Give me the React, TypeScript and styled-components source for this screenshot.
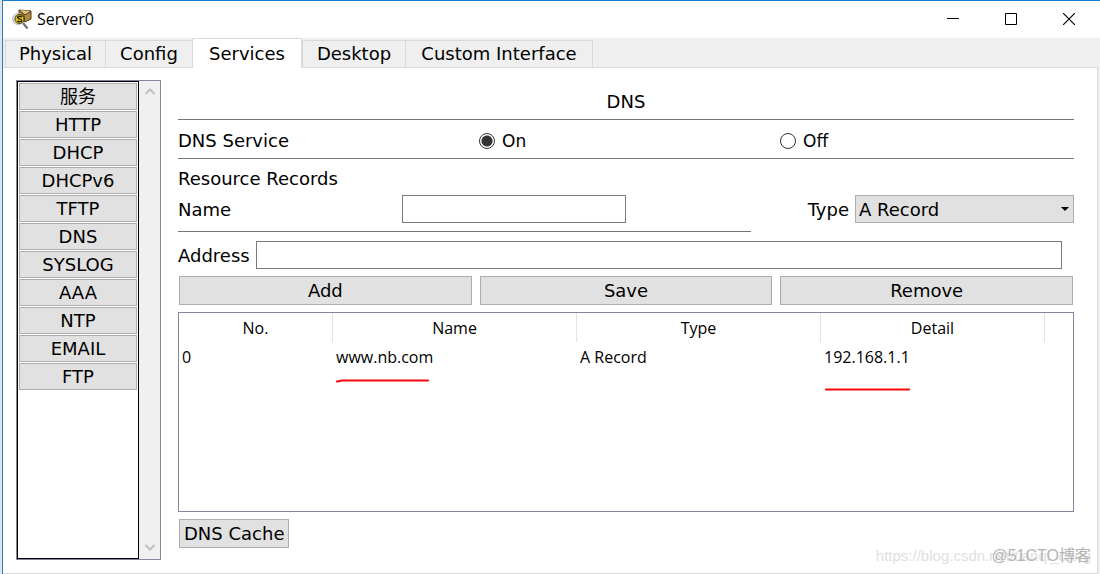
import React from "react";
import styled, { createGlobalStyle } from "styled-components";

const uiFont = `"DejaVu Sans", "Noto Sans CJK SC", sans-serif`;
const systemFont = `"Open Sans", "Noto Sans", sans-serif`;

const GlobalStyle = createGlobalStyle`
  * { box-sizing: border-box; }
  body { margin: 0; background: #fff; color: #000; font: 18px/24px ${uiFont}; }
  button, input, select { font: inherit; color: inherit; border-radius: 0; margin: 0; }
`;

const Desktop = styled.div`
  min-height: 100vh;
  display: flex;
  padding-left: 2px;
  background: #e4e4e4;
`;
const Window = styled.main`
  position: relative;
  flex: 1;
  min-width: 0;
  display: flex;
  flex-direction: column;
  background: #efefef;
  border-top: 1px solid #1a7fd0;
  border-left: 1px solid #1a7fd0;
`;
const TitleBar = styled.header`
  display: flex;
  align-items: center;
  height: 37px;
  background: #fff;
  padding: 0 2px 1px 9px;
`;
const WindowTitle = styled.h1`
  flex: 1;
  margin: 0 0 0 4px;
  font: 16px/24px ${systemFont};
`;
const WindowButton = styled.button`
  display: grid;
  place-items: center;
  width: 58px;
  height: 36px;
  padding: 0;
  border: 0;
  background: transparent;
`;
const Tabs = styled.nav`
  display: flex;
  align-items: flex-end;
  height: 29px;
  padding-left: 2px;
`;
const Tab = styled.button<{ $width: number; $active?: boolean }>`
  width: ${(p) => p.$width}px;
  height: ${(p) => (p.$active ? 30 : 27)}px;
  margin-bottom: ${(p) => (p.$active ? -1 : 0)}px;
  margin-right: ${(p) => (p.$active ? 0 : -1)}px;
  padding: 0;
  border: 1px solid #d9d9d9;
  border-bottom: 0;
  background: ${(p) => (p.$active ? "#fff" : "#efefef")};
  position: relative;
  z-index: ${(p) => (p.$active ? 1 : 0)};
  white-space: nowrap;
`;
const Page = styled.section`
  flex: 1;
  display: flex;
  gap: 17px;
  margin-right: 2px;
  padding: 12px 23px 13px 13px;
  background: #fff;
  border: 1px solid #d9d9d9;
  border-left: 0;
`;
const Sidebar = styled.aside`
  flex: none;
  display: flex;
  width: 145px;
  border: 1px solid #82879a;
`;
const ServiceList = styled.div`
  flex: 1;
  display: flex;
  flex-direction: column;
  gap: 1px;
  padding: 1px;
  border: 1px solid #000;
`;
const PushButton = styled.button<{ $height: number }>`
  height: ${(p) => p.$height}px;
  padding: 0 4px;
  border: 1px solid #adadad;
  background: #e1e1e1;
  line-height: 24px;
  white-space: nowrap;
`;
const ScrollTrack = styled.div`
  display: flex;
  flex-direction: column;
  justify-content: space-between;
  align-items: center;
  width: 21px;
  padding: 6px 0 7px;
  background: #f0f0f0;
`;
const Panel = styled.div`
  flex: 1;
  min-width: 0;
  display: flex;
  flex-direction: column;
`;
const PanelTitle = styled.h2`
  margin: 0;
  padding: 10px 0 5px;
  font: 18px/24px ${uiFont};
  text-align: center;
`;
const Rule = styled.hr<{ $short?: boolean }>`
  width: ${(p) => (p.$short ? "64%" : "100%")};
  height: 1px;
  margin: 0;
  border: 0;
  background: #75756e;
`;
const ServiceRow = styled.div`
  display: grid;
  grid-template-columns: repeat(3, 1fr);
  column-gap: 7px;
  align-items: center;
  height: 38px;
  padding: 5px 0 2px;
`;
const RadioLabel = styled.label`
  display: flex;
  align-items: center;
  gap: 7px;
  font-size: 17px;
`;
const Radio = styled.input`
  appearance: none;
  width: 16px;
  height: 16px;
  border: 1px solid #333;
  border-radius: 50%;
  background: #fff;
  &:checked { background: radial-gradient(circle, #333 5px, #fff 6px); }
`;
const SectionTitle = styled.h3`
  margin: 0;
  padding-top: 8px;
  font: 18px/24px ${uiFont};
`;
const RecordRow = styled.div`
  display: flex;
  align-items: center;
  justify-content: space-between;
  height: 28px;
  margin: 4px 0 8px;
`;
const NameField = styled.div`
  display: grid;
  grid-template-columns: 1fr 1fr;
  align-items: center;
  width: 50%;
`;
const TypeField = styled.div`
  display: flex;
  align-items: center;
  justify-content: flex-end;
  gap: 6px;
`;
const FieldLabel = styled.label`
  padding-top: 2px;
`;
const TextBox = styled.input`
  flex: 1;
  min-width: 0;
  height: 28px;
  padding: 0 4px;
  border: 1px solid #7a7a7a;
  background: #fff;
`;
const SelectWrap = styled.div`
  position: relative;
  width: 219px;
`;
const Select = styled.select`
  appearance: none;
  display: block;
  width: 100%;
  height: 28px;
  padding: 1px 3px 0;
  border: 1px solid #adadad;
  background: #e1e1e1;
`;
const SelectArrow = styled.svg`
  position: absolute;
  right: 5px;
  top: 12px;
  pointer-events: none;
`;
const AddressRow = styled.div`
  display: flex;
  align-items: center;
  gap: 6px;
  margin: 9px 12px 7px 0;
`;
const Actions = styled.div`
  display: grid;
  grid-template-columns: repeat(3, 1fr);
  gap: 8px;
  padding: 0 1px;
`;
const TableFrame = styled.div`
  flex: 1;
  margin: 7px 0;
  border: 1px solid #82879a;
`;
const Table = styled.table`
  width: 100%;
  border-spacing: 0;
  table-layout: fixed;
  font: 16px/24px ${systemFont};
  th { height: 29px; padding: 0; font-weight: 400; border-right: 1px solid #e2e2e2; }
  th:last-child { border-right: 0; }
  td { height: 30px; padding: 0 3px; white-space: nowrap; }
`;
const Marked = styled.span`
  position: relative;
  display: inline-block;
`;
const Underline = styled.svg`
  position: absolute;
  left: 0;
`;
const Footer = styled.div`
  padding-left: 1px;
  margin-bottom: 12px;
`;
const Watermark = styled.div`
  position: absolute;
  right: 9px;
  bottom: 6px;
  font: 15px/24px "Liberation Sans", "Noto Sans CJK SC", sans-serif;
  white-space: nowrap;
  color: #e0e0e0;
`;
const Credit = styled.span`
  position: absolute;
  right: 0;
  top: 0;
  font-size: 16px;
  color: #b4b4b4;
`;

const services = ["服务", "HTTP", "DHCP", "DHCPv6", "TFTP", "DNS", "SYSLOG", "AAA", "NTP", "EMAIL", "FTP"];
const tabs = [
  { label: "Physical", width: 101 },
  { label: "Config", width: 88 },
  { label: "Services", width: 110, active: true },
  { label: "Desktop", width: 104 },
  { label: "Custom Interface", width: 188 },
];

const AppIcon = () => (
  <svg width="21" height="21" viewBox="0 0 21 21" aria-hidden="true">
    <path d="M7 1 19 2v8l-6 3-6-4Z" fill="#b08a3c" stroke="#4b3a18" />
    <path d="m7 1 6 5 6-4" fill="#e3c583" stroke="#4b3a18" />
    <circle cx="6" cy="10" r="5.500" fill="#d8d8d8" stroke="#bdbdbd" />
    <path d="M8 5a5 5 0 0 1 5 6l-3 3Z" fill="#1d4a24" />
    <path d="m11 14 4.500 5.500" stroke="#6d6d6d" strokeWidth="2" />
    <circle cx="7.500" cy="10" r="4.500" fill="#e6c91e" stroke="#4a4210" />
    <path d="M9.800 8.200C8.500 6.800 5.600 7 5.600 8.600c0 1.600 4 1 4 2.800 0 1.600-3 1.700-4.200.3" fill="none" stroke="#2b2600" strokeWidth="1.400" />
  </svg>
);
const Chevron = ({ down = false }: { down?: boolean }) => (
  <svg width="12" height="9" viewBox="0 0 12 9" aria-hidden="true">
    <path d={down ? "m1.500 2 4.500 4.500L10.500 2" : "M1.500 7 6 2.500 10.500 7"} fill="none" stroke="#bfbfbf" strokeWidth="2" />
  </svg>
);

export default function App() {
  return (
    <Desktop>
      <GlobalStyle />
      <Window>
        <TitleBar>
          <AppIcon />
          <WindowTitle>Server0</WindowTitle>
          <WindowButton aria-label="Minimize">
            <svg width="12" height="12"><path d="M0 5.500h12" stroke="#000" /></svg>
          </WindowButton>
          <WindowButton aria-label="Maximize">
            <svg width="12" height="12"><path d="M.5.5h11v11H.5Z" fill="none" stroke="#000" /></svg>
          </WindowButton>
          <WindowButton aria-label="Close">
            <svg width="12" height="12"><path d="m0 0 12 12M12 0 0 12" stroke="#000" strokeWidth="1.200" /></svg>
          </WindowButton>
        </TitleBar>
        <Tabs>
          {tabs.map((t) => (
            <Tab key={t.label} $width={t.width} $active={t.active}>{t.label}</Tab>
          ))}
        </Tabs>
        <Page>
          <Sidebar>
            <ServiceList>
              {services.map((s) => <PushButton key={s} $height={27}>{s}</PushButton>)}
            </ServiceList>
            <ScrollTrack>
              <Chevron />
              <Chevron down />
            </ScrollTrack>
          </Sidebar>
          <Panel>
            <PanelTitle>DNS</PanelTitle>
            <Rule />
            <ServiceRow>
              <span>DNS Service</span>
              <RadioLabel><Radio type="radio" name="dns" defaultChecked />On</RadioLabel>
              <RadioLabel><Radio type="radio" name="dns" />Off</RadioLabel>
            </ServiceRow>
            <Rule />
            <SectionTitle>Resource Records</SectionTitle>
            <RecordRow>
              <NameField>
                <FieldLabel htmlFor="name">Name</FieldLabel>
                <TextBox id="name" />
              </NameField>
              <TypeField>
                <FieldLabel htmlFor="type">Type</FieldLabel>
                <SelectWrap>
                  <Select id="type"><option>A Record</option></Select>
                  <SelectArrow width="8" height="5"><path d="M0 0h8L4 4Z" /></SelectArrow>
                </SelectWrap>
              </TypeField>
            </RecordRow>
            <Rule $short />
            <AddressRow>
              <FieldLabel htmlFor="address">Address</FieldLabel>
              <TextBox id="address" />
            </AddressRow>
            <Actions>
              <PushButton $height={29}>Add</PushButton>
              <PushButton $height={29}>Save</PushButton>
              <PushButton $height={29}>Remove</PushButton>
            </Actions>
            <TableFrame>
              <Table>
                <colgroup>
                  <col width="154" /><col width="244" /><col width="244" /><col width="224" /><col width="28" />
                </colgroup>
                <thead>
                  <tr><th>No.</th><th>Name</th><th>Type</th><th>Detail</th><th /></tr>
                </thead>
                <tbody>
                  <tr>
                    <td>0</td>
                    <td>
                      <Marked>
                        www.nb.com
                        <Underline width="94" height="5" style={{ top: 33 }}>
                          <path d="M1 3.500 6 2.500H92" fill="none" stroke="#f80808" strokeWidth="2.200" strokeLinecap="round" />
                        </Underline>
                      </Marked>
                    </td>
                    <td>A Record</td>
                    <td>
                      <Marked>
                        192.168.1.1
                        <Underline width="88" height="5" style={{ top: 42 }}>
                          <path d="M2 2.500H85" fill="none" stroke="#f80808" strokeWidth="2.200" strokeLinecap="round" />
                        </Underline>
                      </Marked>
                    </td>
                    <td />
                  </tr>
                </tbody>
              </Table>
            </TableFrame>
            <Footer><PushButton $height={29}>DNS Cache</PushButton></Footer>
          </Panel>
        </Page>
        <Watermark>
          https://blog.csdn.net/tianqi_cang
          <Credit>@51CTO博客</Credit>
        </Watermark>
      </Window>
    </Desktop>
  );
}
